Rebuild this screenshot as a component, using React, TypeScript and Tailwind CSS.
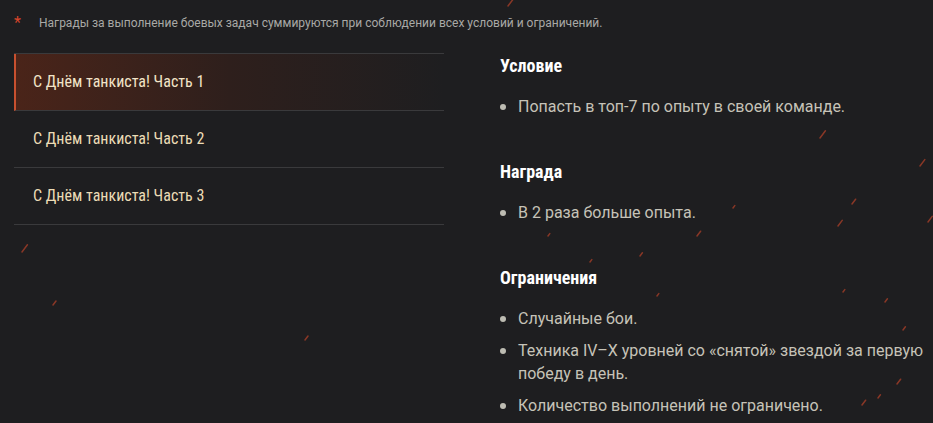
import React from 'react';

const condensed = { fontFamily: '"Roboto Condensed", "Liberation Sans Narrow", "DejaVu Sans Condensed", Roboto, sans-serif' };

const sparks: [number, number, number][] = [
  [508, 6, 9], [405, 62, 10], [22, 252, 9], [53, 305, 5], [305, 340, 5],
  [820, 138, 9], [920, 166, 8], [852, 204, 6], [838, 226, 7], [928, 222, 7],
  [697, 236, 6], [640, 256, 4], [843, 292, 3], [885, 302, 4], [903, 330, 4],
  [897, 384, 6], [862, 405, 6], [878, 398, 4], [548, 236, 3], [590, 262, 3],
  [733, 208, 3], [657, 296, 3],
];

const tabs = ['С Днём танкиста! Часть 1', 'С Днём танкиста! Часть 2', 'С Днём танкиста! Часть 3'];

const sections = [
  { title: 'Условие', items: ['Попасть в топ-7 по опыту в своей команде.'] },
  { title: 'Награда', items: ['В 2 раза больше опыта.'] },
  {
    title: 'Ограничения',
    items: [
      'Случайные бои.',
      'Техника IV–X уровней со «снятой» звездой за первую победу в день.',
      'Количество выполнений не ограничено.',
    ],
  },
];

export default function App() {
  return (
    <div className="relative w-[933px] h-[423px] overflow-hidden bg-[#1e1e20]" style={{ fontFamily: 'Roboto, "Liberation Sans", sans-serif' }}>
      {/* decorative sparks */}
      <svg className="absolute inset-0 pointer-events-none" width="933" height="423">
        {sparks.map(([x, y, l], i) => (
          <line key={i} x1={x} y1={y} x2={x + l * 0.6} y2={y - l * 0.8} stroke="#c2452a" strokeWidth="1.5" strokeLinecap="round" opacity="0.65" />
        ))}
      </svg>

      <div className="relative flex items-center pt-[14px] pl-[14px] text-[12px] text-[#a9a9a6]">
        <span className="text-[#d8452b] text-[16px] leading-none w-[25px]">*</span>
        <span>Награды за выполнение боевых задач суммируются при соблюдении всех условий и ограничений.</span>
      </div>

      <div className="relative flex mt-[21px] pl-[14px]">
        <div className="w-[430px] border-t border-[#3a3a3c]">
          {tabs.map((t, i) => (
            <div
              key={t}
              className={
                i === 0
                  ? 'h-[57px] flex items-center pl-[17px] border-b border-[#3a3a3c] border-l-2 border-l-[#c8502f] bg-gradient-to-r from-[#4a2419] via-[#2e1f1c] to-[#1e1e20] text-[16px] text-[#f2e4c8]'
                  : 'h-[57px] flex items-center pl-[19px] border-b border-[#3a3a3c] text-[16px] text-[#ecdcb6]'
              }
              style={condensed}
            >
              {t}
            </div>
          ))}
        </div>

        <div className="flex-1 pl-[56px] mt-[1px]">
          {sections.map((s) => (
            <div key={s.title} className="mb-[42px]">
              <div className="text-[18px] font-bold text-white leading-[24px]" style={condensed}>{s.title}</div>
              <ul className="mt-[17px] flex flex-col gap-[9px]">
                {s.items.map((it) => (
                  <li key={it} className="flex text-[16px] leading-[23px] text-[#c6c3b8]">
                    <span className="mt-[9px] mr-[12px] w-[6px] h-[6px] rounded-full bg-[#bdbcb2] shrink-0" />
                    <span>{it}</span>
                  </li>
                ))}
              </ul>
            </div>
          ))}
        </div>
      </div>
    </div>
  );
}
